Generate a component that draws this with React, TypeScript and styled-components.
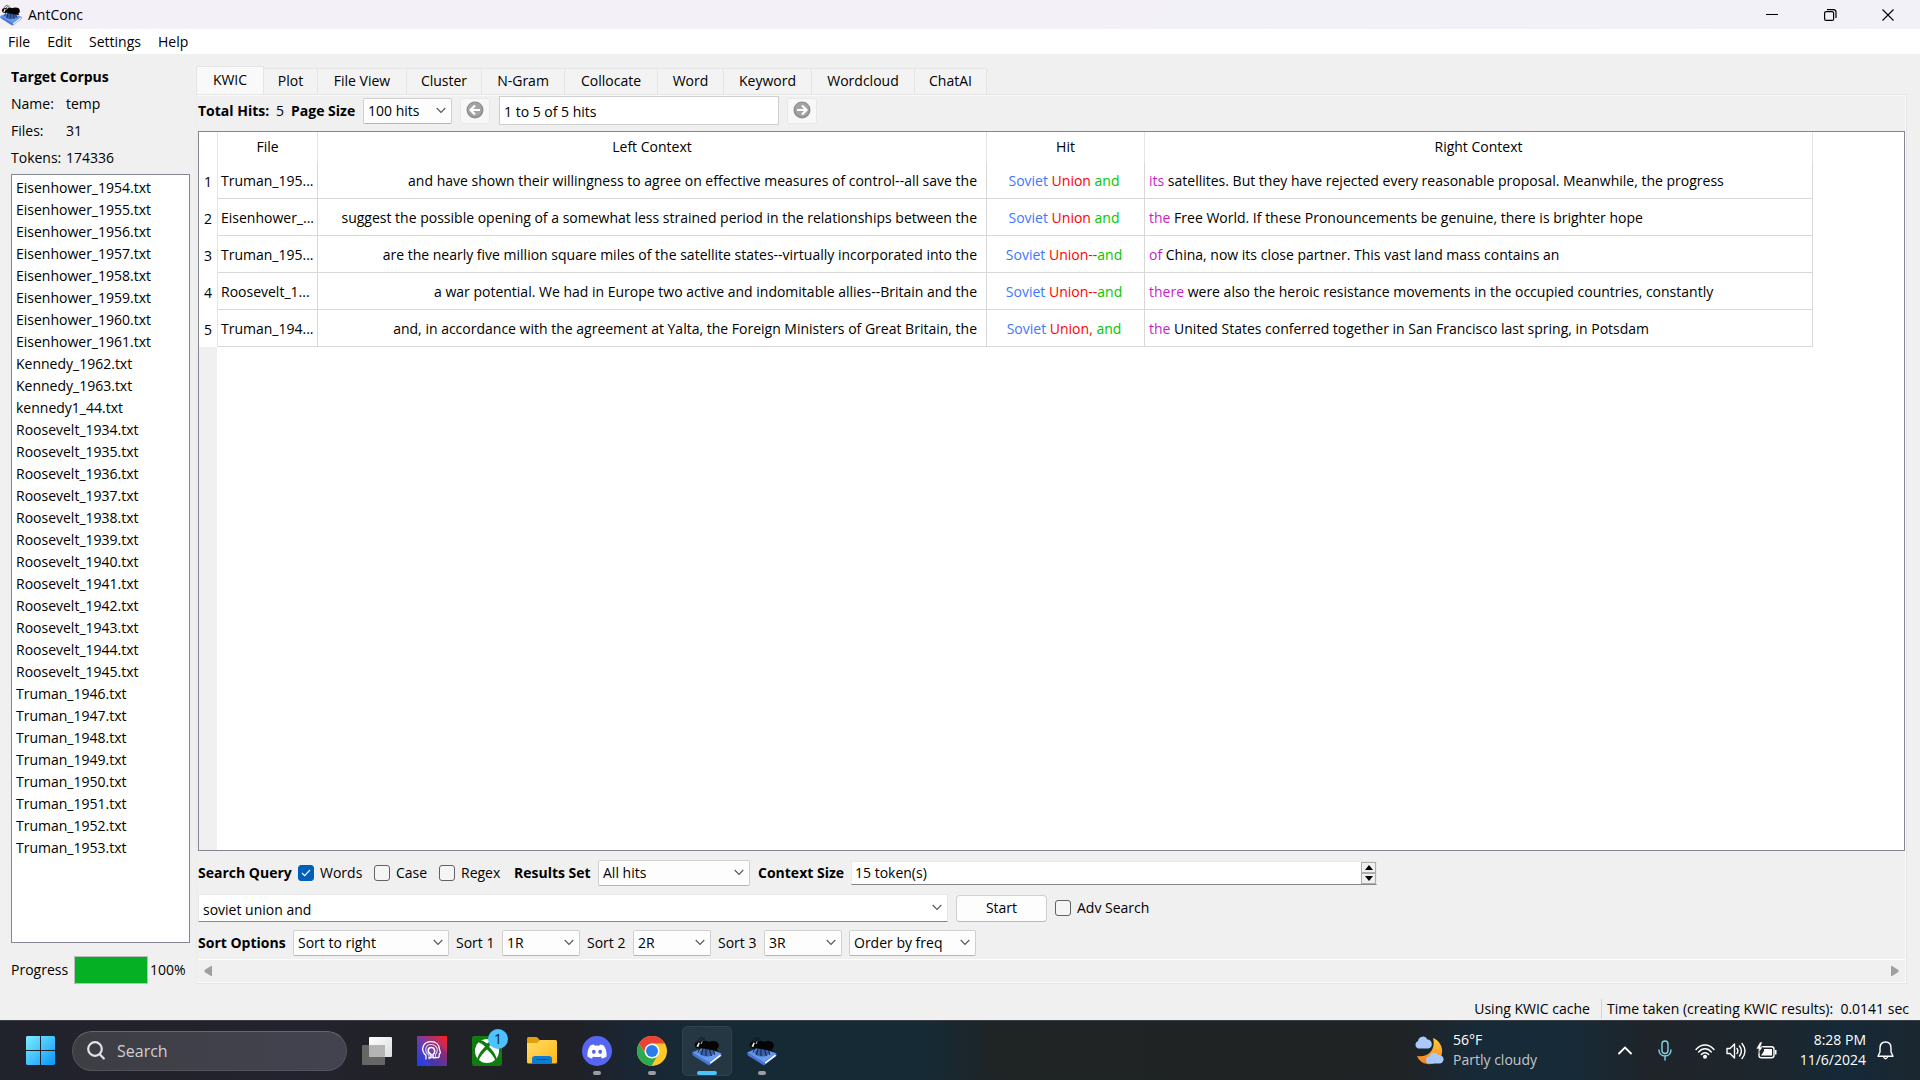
import React from 'react';
import styled, { createGlobalStyle, css } from 'styled-components';

const Global = createGlobalStyle`
  *, *::before, *::after { box-sizing: border-box; }
  html, body { margin: 0; padding: 0; }
  body, button, input, select { font-family: "Open Sans", "Noto Sans", sans-serif; font-size: 14px; line-height: 20px; color: #000; }
  body { background: #f0f0f0; }
`;

const Window = styled.div`
  display: flex;
  flex-direction: column;
  min-height: 100vh;
  background: #f0f0f0;
  white-space: nowrap;
`;

const TitleBar = styled.header`
  display: flex;
  align-items: center;
  height: 29px;
  padding-right: 3px;
  background: linear-gradient(90deg, #f3f0f8, #f3f0f8 55%, #f2f1f7);
`;
const AppName = styled.h1`
  flex: 1;
  margin: 0 0 0 6px;
  font-size: 14px;
  font-weight: 400;
`;
const CaptionButton = styled.button`
  display: grid;
  place-items: center;
  width: 58px;
  height: 29px;
  padding: 0;
  border: 0;
  background: none;
`;

const MenuBar = styled.nav`
  display: flex;
  height: 25px;
  background: #fff;
`;
const MenuItem = styled.button`
  padding: 3px 9px 2px 8px;
  border: 0;
  background: none;
`;

const Main = styled.main`
  flex: 1;
  display: grid;
  grid-template-columns: 179px minmax(0, 1fr);
  gap: 6px;
  padding: 12px 13px 0 11px;
`;

const Sidebar = styled.aside`
  display: flex;
  flex-direction: column;
`;
const SideTitle = styled.h2`
  margin: 0;
  padding: 1px 0 3px;
  font-size: 14px;
  font-weight: 700;
`;
const Facts = styled.dl`
  display: grid;
  grid-template-columns: 55px 1fr;
  grid-auto-rows: 27px;
  align-items: center;
  margin: 0 0 3px;
  dt, dd { margin: 0; }
`;
const FileList = styled.ul`
  flex: 1;
  margin: 0;
  padding: 2px 4px;
  list-style: none;
  background: #fff;
  border: 1px solid #828790;
`;
const FileItem = styled.li`
  height: 22px;
  line-height: 22px;
`;
const ProgressRow = styled.div`
  display: flex;
  align-items: center;
  height: 29px;
  margin-top: 12px;
`;
const Meter = styled.progress`
  appearance: none;
  width: 74px;
  height: 28px;
  margin: 0 2px 0 6px;
  border: 1px solid #bcbcbc;
  background: #e6e6e6;
  &::-webkit-progress-bar { background: #e6e6e6; }
  &::-webkit-progress-value { background: #06b025; }
`;

const Content = styled.section`
  display: flex;
  flex-direction: column;
`;
const TabStrip = styled.div`
  display: flex;
  align-items: flex-end;
  height: 28px;
`;
const Tab = styled.button<{ $w: number; $active?: boolean }>`
  width: ${p => p.$w}px;
  height: ${p => (p.$active ? 28 : 26)}px;
  padding: 0 0 1px;
  border: 1px solid #e5e5e5;
  border-left-width: ${p => (p.$active ? 1 : 0)}px;
  border-bottom: 0;
  background: ${p => (p.$active ? '#f9f9f9' : '#f3f3f3')};
`;
const Pane = styled.div`
  flex: 1;
  display: flex;
  flex-direction: column;
  padding: 1px 1px 2px 1px;
  border: 1px solid #e5e5e5;
  border-left-color: #ececec;
  box-shadow: inset -1px 1px #fafafa, inset 0 -1px #fafafa;
`;

const Row = styled.div<{ $h: number }>`
  display: flex;
  align-items: center;
  height: ${p => p.$h}px;
`;
const HitsRow = styled(Row)`
  padding-bottom: 6px;
`;
const SortRow = styled(Row)`
  padding-top: 4px;
`;
const Strong = styled.label`
  font-weight: 700;
`;
const Label = styled.label`
  font-weight: 400;
`;
const Cell = styled.div<{ $w: number }>`
  flex: none;
  width: ${p => p.$w}px;
`;

const SelectWrap = styled.span<{ $w: number }>`
  position: relative;
  display: flex;
  width: ${p => p.$w}px;
  svg { position: absolute; right: 6px; top: 9px; pointer-events: none; }
`;
const Select = styled.select`
  appearance: none;
  width: 100%;
  height: 26px;
  padding: 0 20px 0 4px;
  background: #fdfdfd;
  border: 1px solid #d0d0d0;
  border-bottom-color: #b5b5b5;
  border-radius: 2px;
`;
const RoundButton = styled.button`
  display: grid;
  place-items: center;
  width: 30px;
  height: 26px;
  padding: 0 0 2px;
  border: 1px solid #e8e8e8;
  border-radius: 3px;
  background: #f8f8f8;
`;
const RangeInput = styled.input`
  width: 280px;
  height: 29px;
  margin: 0 8px 0 9px;
  padding: 2px 4px 0;
  border: 1px solid #cfcfcf;
  background: #fff;
`;

const TableBox = styled.div`
  flex: 1;
  display: flex;
  flex-direction: column;
  border: 1px solid #828790;
  background: linear-gradient(90deg, #f0f0f0 18px, #fff 18px);
`;
const TableBack = styled.div`
  background: #fff;
`;
const Kwic = styled.table`
  table-layout: fixed;
  width: 1614px;
  max-width: 100%;
  border-collapse: separate;
  border-spacing: 0;
  th, td { padding: 0 9px 0 4px; overflow: hidden; border-right: 1px solid #d8d8d8; }
  th { font-weight: 400; padding: 0; text-align: center; }
  thead th { height: 30px; border-right-color: #e5e5e5; }
  tbody td { height: 37px; padding-top: 2px; border-bottom: 1px solid #d8d8d8; }
  tbody th { padding-top: 2px; border-right-color: #e5e5e5; }
`;
const FileCell = styled.td`
  && { padding-left: 3px; padding-right: 0; }
`;
const LeftCell = styled.td`
  text-align: right;
`;
const HitCell = styled.td`
  && { padding-left: 0; padding-right: 3px; }
  text-align: center;
`;
const Token = styled.span<{ $c: string }>`
  color: ${p => p.$c};
`;

const tick = css`
  background-color: #005fb8;
  border-color: #005fb8;
`;
const CheckWrap = styled.span`
  position: relative;
  display: flex;
  width: 16px;
  height: 16px;
  margin-right: 6px;
  svg { position: absolute; left: 3px; top: 4px; pointer-events: none; }
`;
const Check = styled.input`
  appearance: none;
  width: 16px;
  height: 16px;
  margin: 0;
  border: 1px solid #626262;
  border-radius: 3px;
  background: #f5f5f5;
  &:checked { ${tick} }
`;
const Spin = styled.div`
  display: flex;
  align-items: center;
  width: 526px;
  height: 24px;
  padding-left: 1px;
  background: #fff;
  border: 1px solid #e9e9e9;
  border-bottom: 1px solid #868686;
`;
const SpinInput = styled.input`
  flex: 1;
  min-width: 0;
  height: 22px;
  padding: 0 2px;
  border: 0;
  background: none;
`;
const SpinButtons = styled.div`
  display: flex;
  flex-direction: column;
`;
const SpinButton = styled.button`
  display: grid;
  place-items: center;
  width: 15px;
  height: 11px;
  padding: 0;
  border: 1px solid #adadad;
  background: #f0f0f0;
`;
const Query = styled.span`
  position: relative;
  display: flex;
  width: 750px;
  svg { position: absolute; right: 6px; top: 10px; pointer-events: none; }
`;
const QueryInput = styled.input`
  width: 100%;
  height: 28px;
  padding: 2px 24px 0 4px;
  border: 1px solid #e9e9e9;
  border-bottom-color: #868686;
  background: #fff;
`;
const StartButton = styled.button`
  width: 91px;
  height: 27px;
  margin: 0 8px;
  padding: 0;
  border: 1px solid #d0d0d0;
  border-bottom-color: #b9b9b9;
  border-radius: 4px;
  background: #fdfdfd;
`;
const ScrollBar = styled.div`
  display: flex;
  justify-content: space-between;
  align-items: center;
  height: 22px;
  padding: 0 6px;
  border-top: 1px solid #fff;
`;
const ScrollButton = styled.button`
  display: flex;
  padding: 0;
  border: 0;
  background: none;
`;

const StatusBar = styled.footer`
  display: flex;
  justify-content: flex-end;
  align-items: center;
  height: 36px;
  padding: 13px 11px 0 0;
`;
const StatusText = styled.span`
  & + & { margin-left: 11px; padding-left: 5px; border-left: 1px solid #d4d4d4; }
`;

const Taskbar = styled.div`
  display: flex;
  align-items: center;
  height: 60px;
  border-top: 1px solid #3c3f44;
  color: #fff;
  background: linear-gradient(90deg, #21232c 0, #22222b 9%, #22232e 15%, #212226 22%, #202127 30%, #1a2634 33%, #162a36 37%, #162a35 48%, #1f2425 52%, #1f2324 68%, #202325 73%, #172a38 77%, #172a37 82%, #1f2429 86%, #1d262d 92%, #152937 96%, #1b2730 100%);
`;
const StartMenu = styled.button`
  display: flex;
  margin: 0 17px 0 26px;
  padding: 0;
  border: 0;
  background: none;
`;
const SearchPill = styled.label`
  display: flex;
  align-items: center;
  gap: 12px;
  width: 275px;
  height: 40px;
  margin-right: 5px;
  padding: 0 14px;
  border: 1px solid #53535b;
  border-top-color: #66666e;
  border-radius: 20px;
  background: linear-gradient(90deg, #3d3e44, #434350);
`;
const SearchInput = styled.input`
  min-width: 0;
  width: 200px;
  padding: 0;
  border: 0;
  background: none;
  font-size: 16px;
  &::placeholder { color: #cfcfd3; opacity: 1; }
`;
const TaskButton = styled.button<{ $active?: boolean }>`
  position: relative;
  display: grid;
  place-items: center;
  width: 50px;
  height: 50px;
  margin-right: 5px;
  padding: 0;
  border: 1px solid ${p => (p.$active ? '#2f424f' : 'transparent')};
  border-radius: 5px;
  background: ${p => (p.$active ? '#243743' : 'none')};
`;
const Indicator = styled.span<{ $active?: boolean }>`
  position: absolute;
  bottom: 0;
  width: ${p => (p.$active ? 20 : 8)}px;
  height: 4px;
  border-radius: 2px;
  background: ${p => (p.$active ? '#4cc2ff' : '#9a9da2')};
`;
const Badge = styled.span`
  position: absolute;
  right: 3px;
  top: 2px;
  width: 20px;
  height: 20px;
  border-radius: 10px;
  background: #4cc2ff;
  color: #10222c;
  text-align: center;
`;
const Weather = styled.button`
  display: flex;
  align-items: center;
  gap: 9px;
  margin: 0 71px 0 auto;
  padding: 0;
  border: 0;
  background: none;
  color: #fff;
  text-align: left;
`;
const Muted = styled.span`
  color: #c3c6c9;
`;
const Lines = styled.span`
  display: flex;
  flex-direction: column;
  padding-bottom: 2px;
`;
const TrayButton = styled.button<{ $w: number }>`
  display: grid;
  place-items: center;
  width: ${p => p.$w}px;
  height: 40px;
  padding: 0;
  border: 0;
  background: none;
  color: #fff;
`;
const Clock = styled.button`
  display: flex;
  flex-direction: column;
  align-items: flex-end;
  width: 84px;
  padding: 0 0 2px;
  border: 0;
  background: none;
  color: #fff;
  text-align: right;
`;
const BellButton = styled(TrayButton)`
  margin-right: 16px;
`;

const Chevron = () => (
  <svg width="10" height="7" viewBox="0 0 10 7" fill="none" stroke="#555" strokeWidth="1.1"><path d="M.7 1 5 5.4 9.3 1" /></svg>
);

const AntIcon = ({ size, id }: { size: number; id: string }) => (
  <svg width={size} height={size} viewBox="0 0 30 30">
    <defs>
      <linearGradient id={id} x1="0" y1="0" x2="1" y2="1"><stop offset="0" stopColor="#5a8ee6" /><stop offset="1" stopColor="#6fa2f4" /></linearGradient>
    </defs>
    <path d="M0 16.500 12 11.500 29.500 17.500 17 27Z" fill={`url(#${id})`} />
    <path d="M0 16.500 17 26 17 29.500 1 19.500Z" fill="#4578d4" />
    <path d="M17 26 29.500 17.500 29.500 20 17 29.500Z" fill="#3a6cc8" />
    <path d="m17.500 26.500 10.500-8 1.200 1.300-10.700 8Z" fill="#fff" />
    <ellipse cx="15" cy="16.500" rx="7.500" ry="4" fill="#2c4f96" opacity=".75" />
    <ellipse cx="7" cy="9" rx="4.300" ry="3.400" fill="#080808" />
    <ellipse cx="13" cy="8.500" rx="5" ry="3.800" fill="#050505" />
    <ellipse cx="21" cy="9.500" rx="6" ry="4.600" fill="#050505" />
    <path d="M22 10 26.500 15.500 23 14.500 10 12.500 9 9Z" fill="#050505" />
    <path d="M5.500 5.500 7.500 2.500 10.500 1.500M8 5.500 10 3.500 13 2.500M8 12 6 16.500M11 12 9.500 19M14 12 14 20M17 12 19.500 20M21 13 23 19" stroke="#0a0f1c" strokeWidth=".8" fill="none" />
    <path d="m4.500 10.500 2-4 1.300.5-1.500 4Z" fill="#f2f2f2" />
    <path d="m9 8 1.200-2.500" stroke="#d8d8d8" strokeWidth=".9" />
  </svg>
);

const ArrowDisc = ({ flip }: { flip?: boolean }) => (
  <svg width="18" height="18" viewBox="0 0 18 18">
    <circle cx="9" cy="9" r="8.500" fill="#8f8f8f" />
    <circle cx="9" cy="8.500" r="7" fill="#a3a3a3" />
    <path transform={flip ? 'matrix(-1 0 0 1 18 0)' : undefined} d="M14 9H5M9 4.500 4.500 9 9 13.500" stroke="#fff" strokeWidth="2.200" fill="none" />
  </svg>
);

const Drop = ({ id, label, w, value }: { id: string; label: string; w: number; value: string }) => (
  <SelectWrap $w={w}>
    <Select id={id} aria-label={label}><option>{value}</option></Select>
    <Chevron />
  </SelectWrap>
);

const Tick = ({ id, checked }: { id: string; checked?: boolean }) => (
  <CheckWrap>
    <Check type="checkbox" id={id} defaultChecked={checked} />
    {checked && <svg width="10" height="8" viewBox="0 0 10 8" fill="none" stroke="#fff" strokeWidth="1.100"><path d="m1 4 2.600 2.700L9 1" /></svg>}
  </CheckWrap>
);

const range = (name: string, from: number, to: number) =>
  Array.from({ length: to - from + 1 }, (_, i) => `${name}_${from + i}.txt`);
const files = [
  ...range('Eisenhower', 1954, 1961),
  ...range('Kennedy', 1962, 1963),
  'kennedy1_44.txt',
  ...range('Roosevelt', 1934, 1945),
  ...range('Truman', 1946, 1953),
];

const tabs: [string, number][] = [
  ['KWIC', 68], ['Plot', 54], ['File View', 89], ['Cluster', 75], ['N-Gram', 83],
  ['Collocate', 93], ['Word', 66], ['Keyword', 88], ['Wordcloud', 103], ['ChatAI', 72],
];

const hits = [
  ['Truman_195...', 'and have shown their willingness to agree on effective measures of control--all save the', 'Union ', 'its', 'satellites. But they have rejected every reasonable proposal. Meanwhile, the progress'],
  ['Eisenhower_...', 'suggest the possible opening of a somewhat less strained period in the relationships between the', 'Union ', 'the', 'Free World. If these Pronouncements be genuine, there is brighter hope'],
  ['Truman_195...', 'are the nearly five million square miles of the satellite states--virtually incorporated into the', 'Union--', 'of', 'China, now its close partner. This vast land mass contains an'],
  ['Roosevelt_1...', 'a war potential. We had in Europe two active and indomitable allies--Britain and the', 'Union--', 'there', 'were also the heroic resistance movements in the occupied countries, constantly'],
  ['Truman_194...', 'and, in accordance with the agreement at Yalta, the Foreign Ministers of Great Britain, the', 'Union, ', 'the', 'United States conferred together in San Francisco last spring, in Potsdam'],
];

export default function App() {
  return (
    <Window>
      <Global />
      <TitleBar>
        <AntIcon size={22} id="ant-title" />
        <AppName>AntConc</AppName>
        <CaptionButton aria-label="Minimize"><svg width="12" height="12" viewBox="0 0 12 12"><path d="M0 5.500h12" stroke="#000" /></svg></CaptionButton>
        <CaptionButton aria-label="Restore"><svg width="13" height="12" viewBox="0 0 13 12" fill="none" stroke="#000" strokeWidth="1.200"><rect x=".6" y="2.600" width="9" height="8.800" rx="1.500" /><path d="M3 .6h6.500A2.500 2.500 0 0 1 12 3v6" /></svg></CaptionButton>
        <CaptionButton aria-label="Close"><svg width="12" height="12" viewBox="0 0 12 12"><path d="m.5.5 11 11m0-11-11 11" stroke="#000" strokeWidth="1.100" /></svg></CaptionButton>
      </TitleBar>
      <MenuBar>
        {['File', 'Edit', 'Settings', 'Help'].map(m => <MenuItem key={m}>{m}</MenuItem>)}
      </MenuBar>

      <Main>
        <Sidebar>
          <SideTitle>Target Corpus</SideTitle>
          <Facts>
            <dt>Name:</dt><dd>temp</dd>
            <dt>Files:</dt><dd>31</dd>
            <dt>Tokens:</dt><dd>174336</dd>
          </Facts>
          <FileList>{files.map(f => <FileItem key={f}>{f}</FileItem>)}</FileList>
          <ProgressRow>
            <label htmlFor="progress">Progress</label>
            <Meter id="progress" value={100} max={100} />
            <span>100%</span>
          </ProgressRow>
        </Sidebar>

        <Content>
          <TabStrip role="tablist">
            {tabs.map(([name, w], i) => <Tab key={name} role="tab" aria-selected={i === 0} $w={w} $active={i === 0}>{name}</Tab>)}
          </TabStrip>
          <Pane>
            <HitsRow $h={35}>
              <Cell $w={78}><Strong as="span">Total Hits:</Strong></Cell>
              <Cell $w={15}>5</Cell>
              <Cell $w={72}><Strong htmlFor="page-size">Page Size</Strong></Cell>
              <Drop id="page-size" label="Page Size" w={89} value="100 hits" />
              <Cell $w={8} />
              <RoundButton aria-label="Previous page"><ArrowDisc /></RoundButton>
              <RangeInput aria-label="Displayed hits" defaultValue="1 to 5 of 5 hits" />
              <RoundButton aria-label="Next page"><ArrowDisc flip /></RoundButton>
            </HitsRow>
            <TableBox>
              <TableBack>
                <Kwic>
                  <colgroup>
                    <col style={{ width: 19 }} /><col style={{ width: 100 }} /><col style={{ width: 669 }} /><col style={{ width: 158 }} /><col />
                  </colgroup>
                  <thead>
                    <tr><th /><th>File</th><th>Left Context</th><th>Hit</th><th>Right Context</th></tr>
                  </thead>
                  <tbody>
                    {hits.map(([file, left, mid, first, rest], i) => (
                      <tr key={i}>
                        <th scope="row">{i + 1}</th>
                        <FileCell>{file}</FileCell>
                        <LeftCell>{left}</LeftCell>
                        <HitCell><Token $c="#3c78ff">Soviet </Token><Token $c="#ff0000">{mid}</Token><Token $c="#00c800">and</Token></HitCell>
                        <td><Token $c="#c81ec8">{first}</Token> {rest}</td>
                      </tr>
                    ))}
                  </tbody>
                </Kwic>
              </TableBack>
            </TableBox>
            <Row $h={43}>
              <Cell $w={100}><Strong as="span">Search Query</Strong></Cell>
              <Tick id="words" checked /><Cell $w={54}><Label htmlFor="words">Words</Label></Cell>
              <Tick id="case" /><Cell $w={43}><Label htmlFor="case">Case</Label></Cell>
              <Tick id="regex" /><Cell $w={53}><Label htmlFor="regex">Regex</Label></Cell>
              <Cell $w={84}><Strong htmlFor="results">Results Set</Strong></Cell>
              <Drop id="results" label="Results Set" w={152} value="All hits" />
              <Cell $w={8} />
              <Cell $w={93}><Strong htmlFor="context">Context Size</Strong></Cell>
              <Spin>
                <SpinInput id="context" defaultValue="15 token(s)" />
                <SpinButtons>
                  <SpinButton aria-label="Increase"><svg width="8" height="5" viewBox="0 0 8 5"><path d="M4 0 8 5H0Z" /></svg></SpinButton>
                  <SpinButton aria-label="Decrease"><svg width="8" height="5" viewBox="0 0 8 5"><path d="M0 0h8L4 5Z" /></svg></SpinButton>
                </SpinButtons>
              </Spin>
            </Row>
            <Row $h={28}>
              <Query><QueryInput aria-label="Search query" defaultValue="soviet union and" /><Chevron /></Query>
              <StartButton>Start</StartButton>
              <Tick id="adv" /><Label htmlFor="adv">Adv Search</Label>
            </Row>
            <SortRow $h={37}>
              <Cell $w={95}><Strong as="span">Sort Options</Strong></Cell>
              <Drop id="sort" label="Sort direction" w={156} value="Sort to right" />
              <Cell $w={7} />
              <Cell $w={46}><Label htmlFor="s1">Sort 1</Label></Cell><Drop id="s1" label="Sort 1" w={78} value="1R" />
              <Cell $w={7} />
              <Cell $w={46}><Label htmlFor="s2">Sort 2</Label></Cell><Drop id="s2" label="Sort 2" w={78} value="2R" />
              <Cell $w={7} />
              <Cell $w={46}><Label htmlFor="s3">Sort 3</Label></Cell><Drop id="s3" label="Sort 3" w={78} value="3R" />
              <Cell $w={7} />
              <Drop id="order" label="Order" w={127} value="Order by freq" />
            </SortRow>
            <ScrollBar>
              <ScrollButton aria-label="Scroll left"><svg width="8" height="10" viewBox="0 0 8 10"><path d="M8 0v10H7L.5 6V4L7 0Z" fill="#a0a0a0" /></svg></ScrollButton>
              <ScrollButton aria-label="Scroll right"><svg width="8" height="10" viewBox="0 0 8 10"><path d="M0 0v10h1L7.500 6V4L1 0Z" fill="#a0a0a0" /></svg></ScrollButton>
            </ScrollBar>
          </Pane>
        </Content>
      </Main>

      <StatusBar>
        <StatusText>Using KWIC cache</StatusText>
        <StatusText>Time taken (creating KWIC results):&nbsp; 0.0141 sec</StatusText>
      </StatusBar>

      <Taskbar>
        <StartMenu aria-label="Start menu">
          <svg width="29" height="29" viewBox="0 0 29 29">
            <defs><linearGradient id="win" x1="0" y1="0" x2="1" y2="1" ><stop offset="0" stopColor="#7deeff" /><stop offset="1" stopColor="#0a96fa" /></linearGradient></defs>
            <path fill="url(#win)" d="M1 0h13v14H0V1ZM15 0h13l1 1v13H15ZM0 15h14v14H1L0 28ZM15 15h14v13l-1 1H15Z" />
          </svg>
        </StartMenu>
        <SearchPill>
          <svg width="18" height="19" viewBox="0 0 18 19" fill="none" stroke="#e2e2e6" strokeWidth="2.200" strokeLinecap="round"><circle cx="8" cy="8" r="6.800" /><path d="m12.800 13.200 4 4.300" /></svg>
          <SearchInput placeholder="Search" aria-label="Search" />
        </SearchPill>
        <TaskButton aria-label="Task view">
          <svg width="30" height="28" viewBox="0 0 30 28">
            <defs><linearGradient id="tv" x1="0" y1="0" x2="1" y2="1"><stop offset="0" stopColor="#fff" /><stop offset="1" stopColor="#dcdcdc" /></linearGradient></defs>
            <rect x="0" y="8" width="23" height="20" rx="1" fill="#666" /><rect x="7" y="0" width="23" height="20" rx="1" fill="url(#tv)" /><path d="M7 8h16v12H7Z" fill="#b4b4b4" />
          </svg>
        </TaskButton>
        <TaskButton aria-label="Assistant">
          <svg width="30" height="30" viewBox="0 0 30 30">
            <defs><linearGradient id="as" x1="0" y1="1" x2="1" y2="0"><stop offset="0" stopColor="#1040f5" /><stop offset=".45" stopColor="#6a3cb0" /><stop offset="1" stopColor="#ff2020" /></linearGradient></defs>
            <path fill="url(#as)" d="M0 0h30v30H0Z" />
            <path d="M8 23 22 9l8 8v13H15Z" fill="#30206a" opacity=".25" />
            <g fill="none" stroke="#fff" strokeLinejoin="round">
              <path d="M9 23.500V19.500C2.500 13 6.500 5.700 14 5.700c5 0 8 3 8.300 7l1.200 4.300-1.300.8V20q0 1.700-2 1.700h-2" strokeWidth="1.300" />
              <path d="M12 23.500V19C6.500 15.500 8.500 8.500 14 8.500s8.300 5.500 4.500 10v2.500" strokeWidth="1.200" opacity=".75" />
              <path d="M11.700 21.700h2.300v-3.400C10 16.500 10.500 11.500 14.300 11.500S18.700 16.500 16 18.300v3.400h2.500" strokeWidth="1.600" />
            </g>
          </svg>
        </TaskButton>
        <TaskButton aria-label="Xbox">
          <svg width="30" height="30" viewBox="0 0 30 30">
            <rect width="30" height="30" rx="2" fill="#107c10" />
            <circle cx="15" cy="15" r="12" fill="#fff" />
            <path d="M6 4.500C10 3.500 13 6 15 7.500 17 6 20 3.500 24 4.500L22.500 7C20 7.500 18.500 9 17 10.800 21.500 15 25.500 21 24.500 25.500L23.300 24.500C22 20.500 18.500 16.500 15 13.500 11.500 16.500 8 20.500 6.700 24.500L5.500 25.500C4.500 21 8.500 15 13 10.800 11.500 9 10 7.500 7.500 7Z" fill="#107c10" />
          </svg>
          <Badge>1</Badge>
        </TaskButton>
        <TaskButton aria-label="File Explorer">
          <svg width="30" height="27" viewBox="0 0 30 27">
            <defs><linearGradient id="fo" x1="0" y1="0" x2="1" y2="1"><stop offset="0" stopColor="#ffdc68" /><stop offset="1" stopColor="#ffb914" /></linearGradient></defs>
            <path d="M0 1.500Q0 0 1.500 0H9q1 0 2 1l2 2.500V9H0Z" fill="#e0a00c" /><path d="M0 6h10l3-3h15.500Q30 3 30 4.500V25q0 1.500-1.500 1.500h-27Q0 26.500 0 25Z" fill="url(#fo)" /><path d="M5 27v-5q0-3 3-3h14q3 0 3 3v5Z" fill="#0c7bd2" /><path d="M9 22.500h13" stroke="#084f96" />
          </svg>
        </TaskButton>
        <TaskButton aria-label="Discord">
          <svg width="30" height="30" viewBox="0 0 30 30"><circle cx="15" cy="15" r="15" fill="#5865f2" /><path d="M12 8.500C10 8.700 8.500 9.500 8 9.800 6 13 5 17 5.500 20.500 7 21.700 8.500 22.300 10 22.500L11 20.800 9.800 20.200Q15 22 20.200 20.200L19 20.800 20 22.500C21.500 22.300 23 21.700 24.500 20.500 25 17 24 13 22 9.800 21.500 9.500 20 8.700 18 8.500L17.300 9.800Q15 9.300 12.700 9.800Z" fill="#fff" /><ellipse cx="11.800" cy="15.800" rx="1.900" ry="2.100" fill="#5865f2" /><ellipse cx="18.200" cy="15.800" rx="1.900" ry="2.100" fill="#5865f2" /></svg>
          <Indicator />
        </TaskButton>
        <TaskButton aria-label="Chrome">
          <svg width="30" height="30" viewBox="0 0 30 30"><circle cx="15" cy="15" r="15" fill="#fdc92a" /><path d="M2 7.500A15 15 0 0 1 28 7.500H15L9 18.500Z" fill="#ea4335" /><path d="M2 7.500 8.900 18.700 15 22 21 18.500 14.500 30A15 15 0 0 1 2 7.500Z" fill="#2da94f" /><circle cx="15" cy="15" r="7.500" fill="#fff" /><circle cx="15" cy="15" r="6" fill="#2a7de9" /></svg>
          <Indicator />
        </TaskButton>
        <TaskButton $active aria-label="AntConc"><AntIcon size={30} id="ant-a" /><Indicator $active /></TaskButton>
        <TaskButton aria-label="AntConc window 2"><AntIcon size={30} id="ant-b" /><Indicator /></TaskButton>

        <Weather>
          <svg width="30" height="30" viewBox="0 0 30 30">
            <defs><linearGradient id="mo" x1="0" y1="0" x2="0" y2="1"><stop offset="0" stopColor="#ffd03c" /><stop offset="1" stopColor="#f57c1e" /></linearGradient></defs>
            <path d="M19 2C29 6 31 18 24 25 16 31 6 28 3 20 15 22 22 13 19 2Z" fill="url(#mo)" />
            <path d="M4 12.500a4 4 0 0 1 0-7.500 5 5 0 0 1 9.500-1.500 4.600 4.600 0 0 1 1 9Z" fill="#a9c8fb" />
            <path d="M15.500 27.500a3.500 3.500 0 0 1 0-7 5 5 0 0 1 9-1.500 4.300 4.300 0 0 1 1.500 8.500Z" fill="#a9c8fb" />
          </svg>
          <Lines><span>56°F</span><Muted>Partly cloudy</Muted></Lines>
        </Weather>
        <TrayButton $w={34} aria-label="Hidden icons"><svg width="14" height="9" viewBox="0 0 14 9" fill="none" stroke="#fff" strokeWidth="1.800" strokeLinecap="round"><path d="m1 7.500 6-6 6 6" /></svg></TrayButton>
        <TrayButton $w={46} aria-label="Microphone"><svg width="14" height="21" viewBox="0 0 14 21" fill="none" stroke="#7fd6e6" strokeWidth="1.400" strokeLinecap="round"><rect x="4" y="1" width="6" height="12.500" rx="3" /><path d="M1 10c0 8 12 8 12 0M7 16v4" /></svg></TrayButton>
        <TrayButton $w={34} aria-label="Wi-Fi"><svg width="20" height="16" viewBox="0 0 20 16" fill="none" stroke="#fff" strokeWidth="1.400" strokeLinecap="round"><path d="M1 6.500C6 .5 14 .5 19 6.500M3.700 9c3.600-4.300 9-4.300 12.600 0M6.300 11.500c2-2.400 5.400-2.400 7.400 0" /><circle cx="10" cy="13.800" r="1.300" fill="#fff" /></svg></TrayButton>
        <TrayButton $w={28} aria-label="Volume"><svg width="20" height="18" viewBox="0 0 20 18" fill="none" stroke="#fff" strokeWidth="1.400" strokeLinecap="round" strokeLinejoin="round"><path d="M1 6.500h3L8.500 2v14L4 11.500H1ZM11 6.500q1.800 2.500 0 5M13.500 4q3.800 5 0 10M16 1.500q6 7.500 0 15" /></svg></TrayButton>
        <TrayButton $w={32} aria-label="Battery"><svg width="21" height="18" viewBox="0 0 21 18"><rect x="3" y="4.700" width="15" height="11" rx="2.500" fill="none" stroke="#fff" strokeWidth="1.400" /><path d="M8 7h8v6.500H5L8 9ZM19 8h1.500v4.500H19Z" fill="#fff" /><path d="M4 0 0 7h3L1.500 12 7 5H4.500L6.500 0Z" fill="#fff" stroke="#1c262d" strokeWidth=".6" /></svg></TrayButton>
        <Clock><span>8:28 PM</span><span>11/6/2024</span></Clock>
        <BellButton $w={38} aria-label="Notifications"><svg width="17" height="19" viewBox="0 0 17 19" fill="none" stroke="#fff" strokeWidth="1.400" strokeLinejoin="round"><path d="M8.500 1C5 1 3 3.600 3 7v4L1 15.200h15L14 11V7c0-3.400-2-6-5.500-6ZM6.500 16q2 3.500 4 0" /></svg></BellButton>
      </Taskbar>
    </Window>
  );
}
